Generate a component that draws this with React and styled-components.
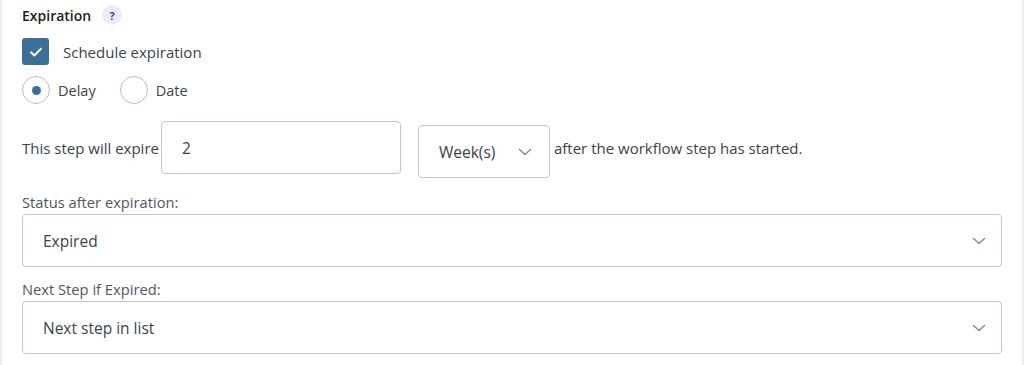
import React from "react";
import styled, { createGlobalStyle } from "styled-components";

const GlobalStyle = createGlobalStyle`
	html, body {
		margin: 0;
		padding: 0;
		background: #ffffff;
	}
	body {
		font-family: "Open Sans", "Noto Sans", sans-serif;
		color: #3c434a;
	}
`;

const Panel = styled.div`
	box-sizing: border-box;
	width: 1024px;
	height: 365px;
	border-left: 2px solid #eceef7;
	border-right: 2px solid #eceef7;
	padding: 5px 20px 0 20px;
	display: flex;
	flex-direction: column;
`;

const Heading = styled.div`
	display: flex;
	align-items: center;
	gap: 11px;
	font-size: 14px;
	font-weight: 600;
	color: #1e1e1e;
	height: 20px;
`;

const HelpBadge = styled.span`
	display: inline-flex;
	align-items: center;
	justify-content: center;
	width: 20px;
	height: 20px;
	border-radius: 50%;
	background: #ecebf7;
	color: #4a4870;
	font-size: 11px;
	font-weight: 700;
`;

const CheckRow = styled.label`
	display: flex;
	align-items: center;
	gap: 14px;
	margin-top: 13px;
	font-size: 15px;
	color: #3c434a;
`;

const CheckBox = styled.span`
	box-sizing: border-box;
	width: 27px;
	height: 27px;
	border-radius: 3px;
	background: #3b6f96;
	display: flex;
	align-items: center;
	justify-content: center;
`;

const RadioGroup = styled.div`
	display: flex;
	align-items: center;
	gap: 24px;
	margin-top: 11px;
`;

const RadioOption = styled.label`
	display: flex;
	align-items: center;
	gap: 8px;
	font-size: 14.5px;
	color: #3c434a;
`;

const RadioCircle = styled.span`
	box-sizing: border-box;
	width: 28px;
	height: 28px;
	border-radius: 50%;
	border: 1px solid #b9bad2;
	background: #fff;
	display: flex;
	align-items: center;
	justify-content: center;

	&::after {
		content: "";
		width: 9px;
		height: 9px;
		border-radius: 50%;
		background: ${(p) => (p.$checked ? "#3b6f96" : "transparent")};
	}
`;

const ExpireRow = styled.div`
	display: flex;
	align-items: flex-start;
	margin-top: 17px;
	font-size: 15px;
	color: #3c434a;
`;

const InlineText = styled.span`
	line-height: 55px;
	white-space: nowrap;
	padding-right: ${(p) => p.$right || 0}px;
	padding-left: ${(p) => p.$left || 0}px;
`;

const TextInput = styled.div`
	box-sizing: border-box;
	width: 240px;
	height: 53px;
	border: 1px solid #c3c4d8;
	border-radius: 4px;
	padding-left: 20px;
	display: flex;
	align-items: center;
	font-size: 15.5px;
	color: #3c434a;
	margin-right: 17px;
`;

const Select = styled.div`
	box-sizing: border-box;
	width: ${(p) => p.$width || "100%"};
	height: 53px;
	margin-top: ${(p) => p.$offset || 0}px;
	border: 1px solid #c3c4d8;
	border-radius: 4px;
	padding: 0 ${(p) => p.$padRight || 14}px 0 20px;
	display: flex;
	align-items: center;
	justify-content: space-between;
	font-size: 15.5px;
	color: #3c434a;
	background: #fff;
`;

const FieldLabel = styled.div`
	font-size: 14.7px;
	color: #50575e;
	margin-top: ${(p) => p.$top || 0}px;
	margin-bottom: 2px;
	line-height: 19px;
`;

const Chevron = () => (
	<svg width="16" height="16" viewBox="0 0 16 16" fill="none">
		<path d="M2.5 5.5 L8 10.5 L13.5 5.5" stroke="#8a8cab" strokeWidth="1.6" strokeLinecap="round" strokeLinejoin="round" />
	</svg>
);

export default function App() {
	return (
		<>
			<GlobalStyle />
			<Panel>
				<Heading>
					Expiration <HelpBadge>?</HelpBadge>
				</Heading>

				<CheckRow>
					<CheckBox>
						<svg width="16" height="16" viewBox="0 0 16 16" fill="none">
							<path d="M3 8.3 L6.4 11.5 L13 4.6" stroke="#fff" strokeWidth="2" strokeLinecap="round" strokeLinejoin="round" />
						</svg>
					</CheckBox>
					Schedule expiration
				</CheckRow>

				<RadioGroup>
					<RadioOption>
						<RadioCircle $checked />
						Delay
					</RadioOption>
					<RadioOption>
						<RadioCircle />
						Date
					</RadioOption>
				</RadioGroup>

				<ExpireRow>
					<InlineText $right={2}>This step will expire</InlineText>
					<TextInput>2</TextInput>
					<Select $width="132px" $offset={4} $padRight={16}>
						Week(s)
						<Chevron />
					</Select>
					<InlineText $left={4}>after the workflow step has started.</InlineText>
				</ExpireRow>

				<FieldLabel $top={15}>Status after expiration:</FieldLabel>
				<Select>
					Expired
					<Chevron />
				</Select>

				<FieldLabel $top={13}>Next Step if Expired:</FieldLabel>
				<Select>
					Next step in list
					<Chevron />
				</Select>
			</Panel>
		</>
	);
}
